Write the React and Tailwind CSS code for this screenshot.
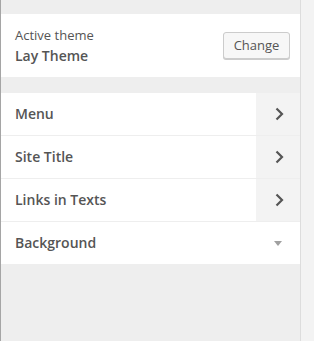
import React from 'react';

const sections = [
  { title: 'Menu', type: 'panel' },
  { title: 'Site Title', type: 'panel' },
  { title: 'Links in Texts', type: 'panel' },
  { title: 'Background', type: 'section' },
];

const Chevron = () => (
  <svg width="9" height="14" viewBox="0 0 9 14" className="block">
    <path d="M1.5 1.5 L7 7 L1.5 12.5" fill="none" stroke="#555" strokeWidth="2.2" />
  </svg>
);

const App = () => {
  return (
    <div
      className="flex w-[314px] h-[341px] bg-[#f3f3f3] overflow-hidden"
      style={{ fontFamily: '"Open Sans", "Noto Sans", sans-serif' }}
    >
      <div className="w-[301px] h-full bg-[#eeeeee] border-l border-l-[#a5a5a5] border-r border-r-[#dddddd] pt-[14px]">
        {/* Active theme */}
        <div className="bg-white h-[63px] flex items-center justify-between pl-[14px] pr-[10px]">
          <div className="text-[#555]">
            <p className="text-[13px] leading-[18px]">Active theme</p>
            <p className="text-[14px] font-semibold leading-[20px] mt-[2px]">Lay Theme</p>
          </div>
          <button className="h-[27px] w-[67px] bg-[#f7f7f7] border border-[#cccccc] rounded-[3px] text-[13px] text-[#555] shadow-[0_1px_0_#cccccc] leading-none">
            Change
          </button>
        </div>

        {/* Sections */}
        <div className="mt-[16px] bg-white">
          {sections.map((s, i) => (
            <div
              key={s.title}
              className={`flex items-stretch ${i < sections.length - 1 ? 'h-[43px] border-b border-[#eeeeee]' : 'h-[42px]'}`}
            >
              <div className="flex-1 flex items-center pl-[14px] pb-[1px] text-[14px] font-semibold text-[#555]">
                {s.title}
              </div>
              {s.type === 'panel' ? (
                <div className="w-[44px] bg-[#f3f3f3] flex items-center justify-center pl-[2px]">
                  <Chevron />
                </div>
              ) : (
                <div className="w-[44px] flex items-center justify-center">
                  <svg width="8" height="5" viewBox="0 0 8 5" className="block">
                    <path d="M0 0 L8 0 L4 5 Z" fill="#a0a0a0" />
                  </svg>
                </div>
              )}
            </div>
          ))}
        </div>
      </div>
    </div>
  );
};

export default App;
